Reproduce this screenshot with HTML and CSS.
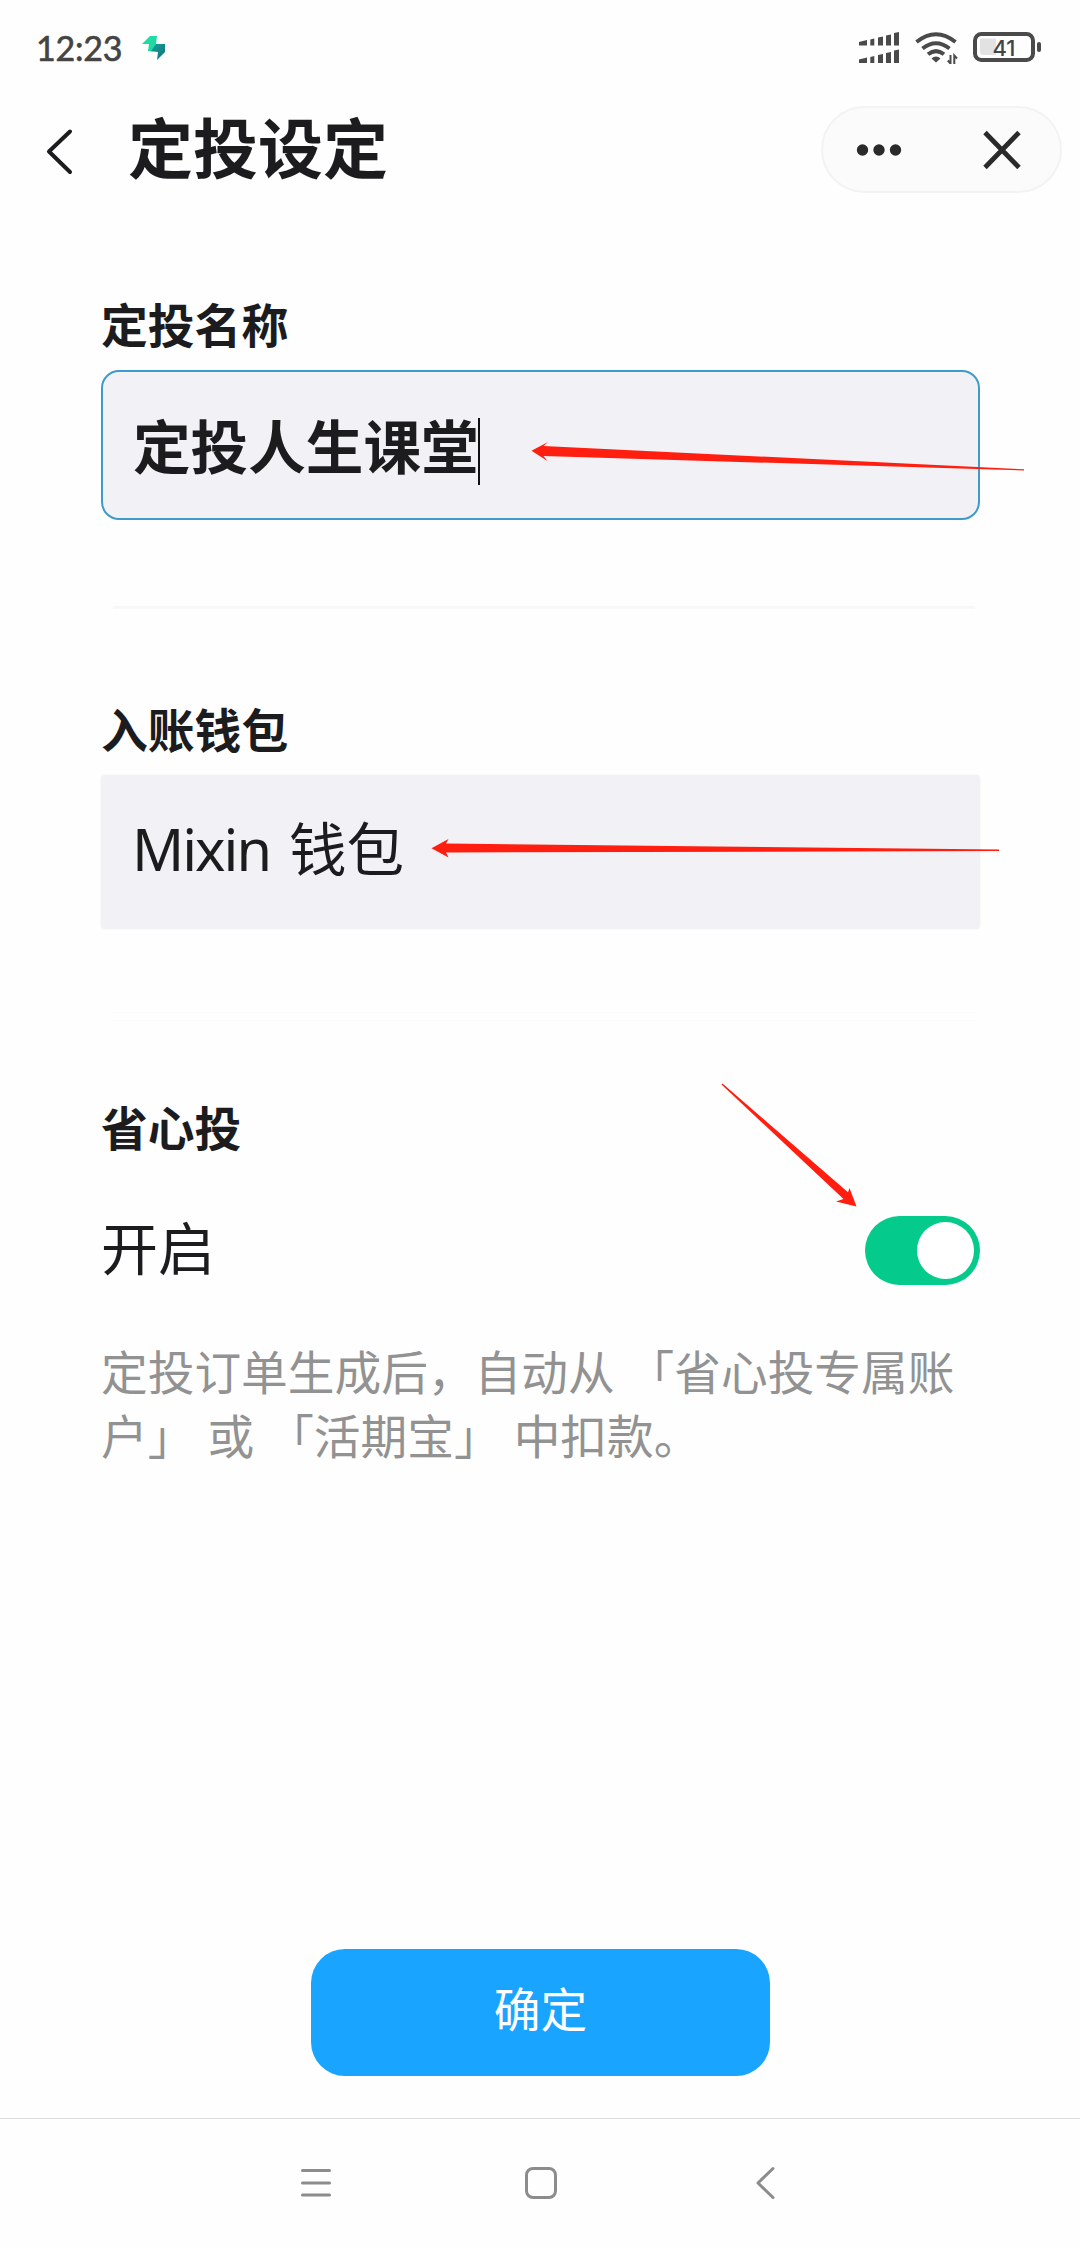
FILE: index.html
```html
<!DOCTYPE html>
<html lang="zh-CN">
<head>
<meta charset="utf-8">
<title>定投设定</title>
<link rel="stylesheet" href="styles.css">
</head>
<body>
<div class="screen">
  <div class="status">
    <span class="clock">12:23</span>
    <svg class="app-badge" width="24" height="26" viewBox="0 0 24 26">
      <defs>
        <linearGradient id="badge" x1="0" y1="0" x2="1" y2="1"><stop offset="0" stop-color="#1fe0a0"/><stop offset="1" stop-color="#1fd8a4"/></linearGradient>
        <linearGradient id="badge-dark" x1="0" y1="0" x2="1" y2="1"><stop offset="0" stop-color="#17a79b"/><stop offset="1" stop-color="#12707c"/></linearGradient>
      </defs>
      <path d="M6 16L9 10L14 9H23V17L15 25L16 17Z" fill="url(#badge-dark)"/>
      <path d="M0 9L8 1L15 1L14 9L9 16H6L7 9Z" fill="url(#badge)"/>
    </svg>
    <svg class="status-icons" width="184" height="36" viewBox="858 30 184 36">
      <g fill="#4a4a4a">
        <path d="M859 42L867 40V45.500H859ZM870.300 39.500L874.300 38.500V45.500H870.300ZM878 37.500L883 36.500V45.500H878ZM886 35.500L891 34.500V45.500H886ZM894 33L899 32V45.500H894Z"/>
        <path d="M859 59.500L867 57.500V63H859ZM870.300 57L874.300 56V63H870.300ZM878 55L883 54V63H878ZM886 53L891 52V63H886ZM894 50.500L899 49.500V63H894Z"/>
        <path d="M931.500 58.500Q936 54.500 940.500 58.500L936 62.500Z"/>
        <rect x="1037" y="42" width="4" height="10" rx="2"/>
      </g>
      <g fill="none" stroke="#4a4a4a" stroke-width="4">
        <path d="M916.500 42Q936 26.500 955.500 42"/>
        <path d="M922.500 48.500Q936 38 949.500 48.500"/>
        <path d="M928 54.300Q936 48 944 54.300"/>
        <rect x="975" y="34" width="58" height="26" rx="6.500"/>
      </g>
      <path d="M950.500 55V64M947.800 60.500L950.500 63.500M954.300 64V55.500L957 58.500" fill="none" stroke="#4a4a4a" stroke-width="2"/>
      <path d="M980 38.500H996V55H983Q980 55 980 52Z" fill="#e2e2e2"/>
      <text class="battery-level" x="1004" y="55.500" text-anchor="middle">41</text>
    </svg>
  </div>

  <header class="header">
    <svg class="back" width="30" height="48" viewBox="0 0 30 48"><path d="M25 4.500L4 24.500L25 45" fill="none" stroke="#1c1c1e" stroke-width="4" stroke-linecap="round" stroke-linejoin="round"/></svg>
    <h1 class="title">定投设定</h1>
    <div class="capsule">
      <svg width="46" height="14" viewBox="0 0 46 14" fill="#2a2a2a"><circle cx="6.500" cy="7" r="5.700"/><circle cx="23" cy="7" r="5.700"/><circle cx="39.500" cy="7" r="5.700"/></svg>
      <svg width="38" height="40" viewBox="0 0 38 40"><path d="M2 2.500L36 37.500M36 2.500L2 37.500" stroke="#2a2a2a" stroke-width="4.800"/></svg>
    </div>
  </header>

  <main class="form">
    <h2 class="label">定投名称</h2>
    <div class="field field-name"><span>定投人生课堂</span><i class="caret"></i></div>
    <div class="divider"></div>
    <h2 class="label label-wallet">入账钱包</h2>
    <div class="field field-wallet"><span><span class="latin">Mixin</span> 钱包</span></div>
    <div class="divider divider-faint"></div>
    <h2 class="label label-auto">省心投</h2>
    <div class="toggle-row"><span>开启</span><div class="toggle"><div class="knob"></div></div></div>
    <p class="hint">定投订单生成后，自动从 「省心投专属账户」 或 「活期宝」 中扣款。</p>
  </main>

  <div class="confirm">确定</div>

  <nav class="nav">
    <svg width="34" height="34" viewBox="0 0 34 34"><path d="M3.500 4.500H30.500M3.500 17H30.500M3.500 29H30.500"/></svg>
    <svg width="34" height="34" viewBox="0 0 34 34"><rect x="2.500" y="2.500" width="29" height="29" rx="6.500"/></svg>
    <svg width="34" height="34" viewBox="0 0 34 34"><path d="M25 2.500L10 17L25 31.500"/></svg>
  </nav>

  <svg class="arrows" width="1080" height="2248" viewBox="0 0 1080 2248" fill="#ff1e10">
    <path d="M531.500 450.700L548 442L543.500 446L1024 469.300V470.500L543.500 456L547.500 461Z"/>
    <path d="M431.500 848.300L448.500 839L446 843.500L999 849.500V851L446 852.500L448.500 857.500Z"/>
    <path d="M856.500 1206.500L849.500 1188L848 1192.300L722.500 1083.500L721.500 1084.500L843.500 1199L836 1201.500Z"/>
  </svg>
</div>
</body>
</html>
```
FILE: styles.css
```css
* { box-sizing: border-box; margin: 0; padding: 0; }

body {
  background: #fefefe;
  color: #1c1c1e;
  font-family: "Noto Sans CJK SC", sans-serif;
}

.screen {
  position: relative;
  display: flex;
  flex-direction: column;
  width: 1080px;
  height: 2248px;
  overflow: hidden;
}

.status {
  display: flex;
  align-items: center;
  height: 96px;
  padding: 0 38px 0 36px;
}

.clock {
  width: 106px;
  color: #444;
  font: 400 34px/40px Lato, sans-serif;
  letter-spacing: -0.200px;
  -webkit-text-stroke: 0.600px #444;
}

.status-icons { margin-left: auto; }

.battery-level {
  fill: #444;
  font: 500 22px Inter, sans-serif;
}

.header {
  display: flex;
  align-items: center;
  height: 108px;
  padding: 0 18px 0 45px;
}

.back { margin-top: 2px; }

.title {
  margin: -11px 0 0 53px;
  font-size: 65px;
  font-weight: 700;
  line-height: 96px;
}

.capsule {
  display: flex;
  align-items: center;
  justify-content: space-between;
  width: 241px;
  height: 87px;
  margin: -1px 0 0 auto;
  padding: 0 39px 0 33px;
  border: 2px solid #f3f3f3;
  border-radius: 44px;
  background: #fbfbfb;
}

.form { padding: 84px 100px 0 101px; }

.label {
  font-size: 46.800px;
  font-weight: 700;
  line-height: 70px;
}

.field {
  display: flex;
  align-items: center;
  padding: 0 0 2px 30px;
  background: #f2f1f6;
  font-size: 57.600px;
  line-height: 84px;
}

.field-name {
  height: 150px;
  margin-top: 12px;
  border: 2px solid #3f9bcb;
  border-radius: 18px;
  font-weight: 700;
}

.caret {
  width: 2px;
  height: 67px;
  margin: 15px 0 0 -1px;
  background: #111;
}

.divider {
  height: 3px;
  margin: 86px 5px 0 12px;
  background: #f8f8f8;
}

.label-wallet { margin-top: 84px; }

.field-wallet {
  height: 154px;
  margin-top: 12px;
  padding: 0 0 10px 31px;
  border-radius: 4px;
  box-shadow: 0 0 3px #f4f4f5;
  word-spacing: 6px;
}

.latin {
  font-family: "Noto Sans", sans-serif;
  letter-spacing: -2px;
}

.divider-faint {
  height: 9px;
  margin-top: 83px;
  border: solid #fafafa;
  border-width: 1px 0;
  background: none;
}

.label-auto { margin-top: 70px; }

.toggle-row {
  display: flex;
  align-items: center;
  justify-content: space-between;
  height: 84px;
  margin-top: 47px;
  font-size: 57px;
  line-height: 84px;
}

.toggle-row > span { margin-top: -11px; }

.toggle {
  width: 115px;
  height: 69px;
  padding: 6px;
  border-radius: 35px;
  background: #04cb8c;
}

.knob {
  width: 57px;
  height: 57px;
  margin-left: auto;
  border-radius: 50%;
  background: #fff;
}

.hint {
  margin-top: 46px;
  color: #929292;
  font-size: 46.700px;
  line-height: 64px;
  word-spacing: 2.600px;
}

.confirm {
  width: 459px;
  height: 127px;
  margin: auto auto 42px 311px;
  border-radius: 34px;
  background: #18a4ff;
  color: #fff;
  font-size: 46.700px;
  line-height: 116px;
  text-align: center;
}

.nav {
  display: flex;
  flex-shrink: 0;
  justify-content: space-between;
  height: 130px;
  padding: 47px 298px 0 299px;
  border-top: 1px solid #dcdcdc;
}

.nav svg {
  fill: none;
  stroke: #8c8c8c;
  stroke-width: 3;
  stroke-linecap: round;
  stroke-linejoin: round;
}

.arrows {
  position: absolute;
  inset: 0;
  pointer-events: none;
}
```
